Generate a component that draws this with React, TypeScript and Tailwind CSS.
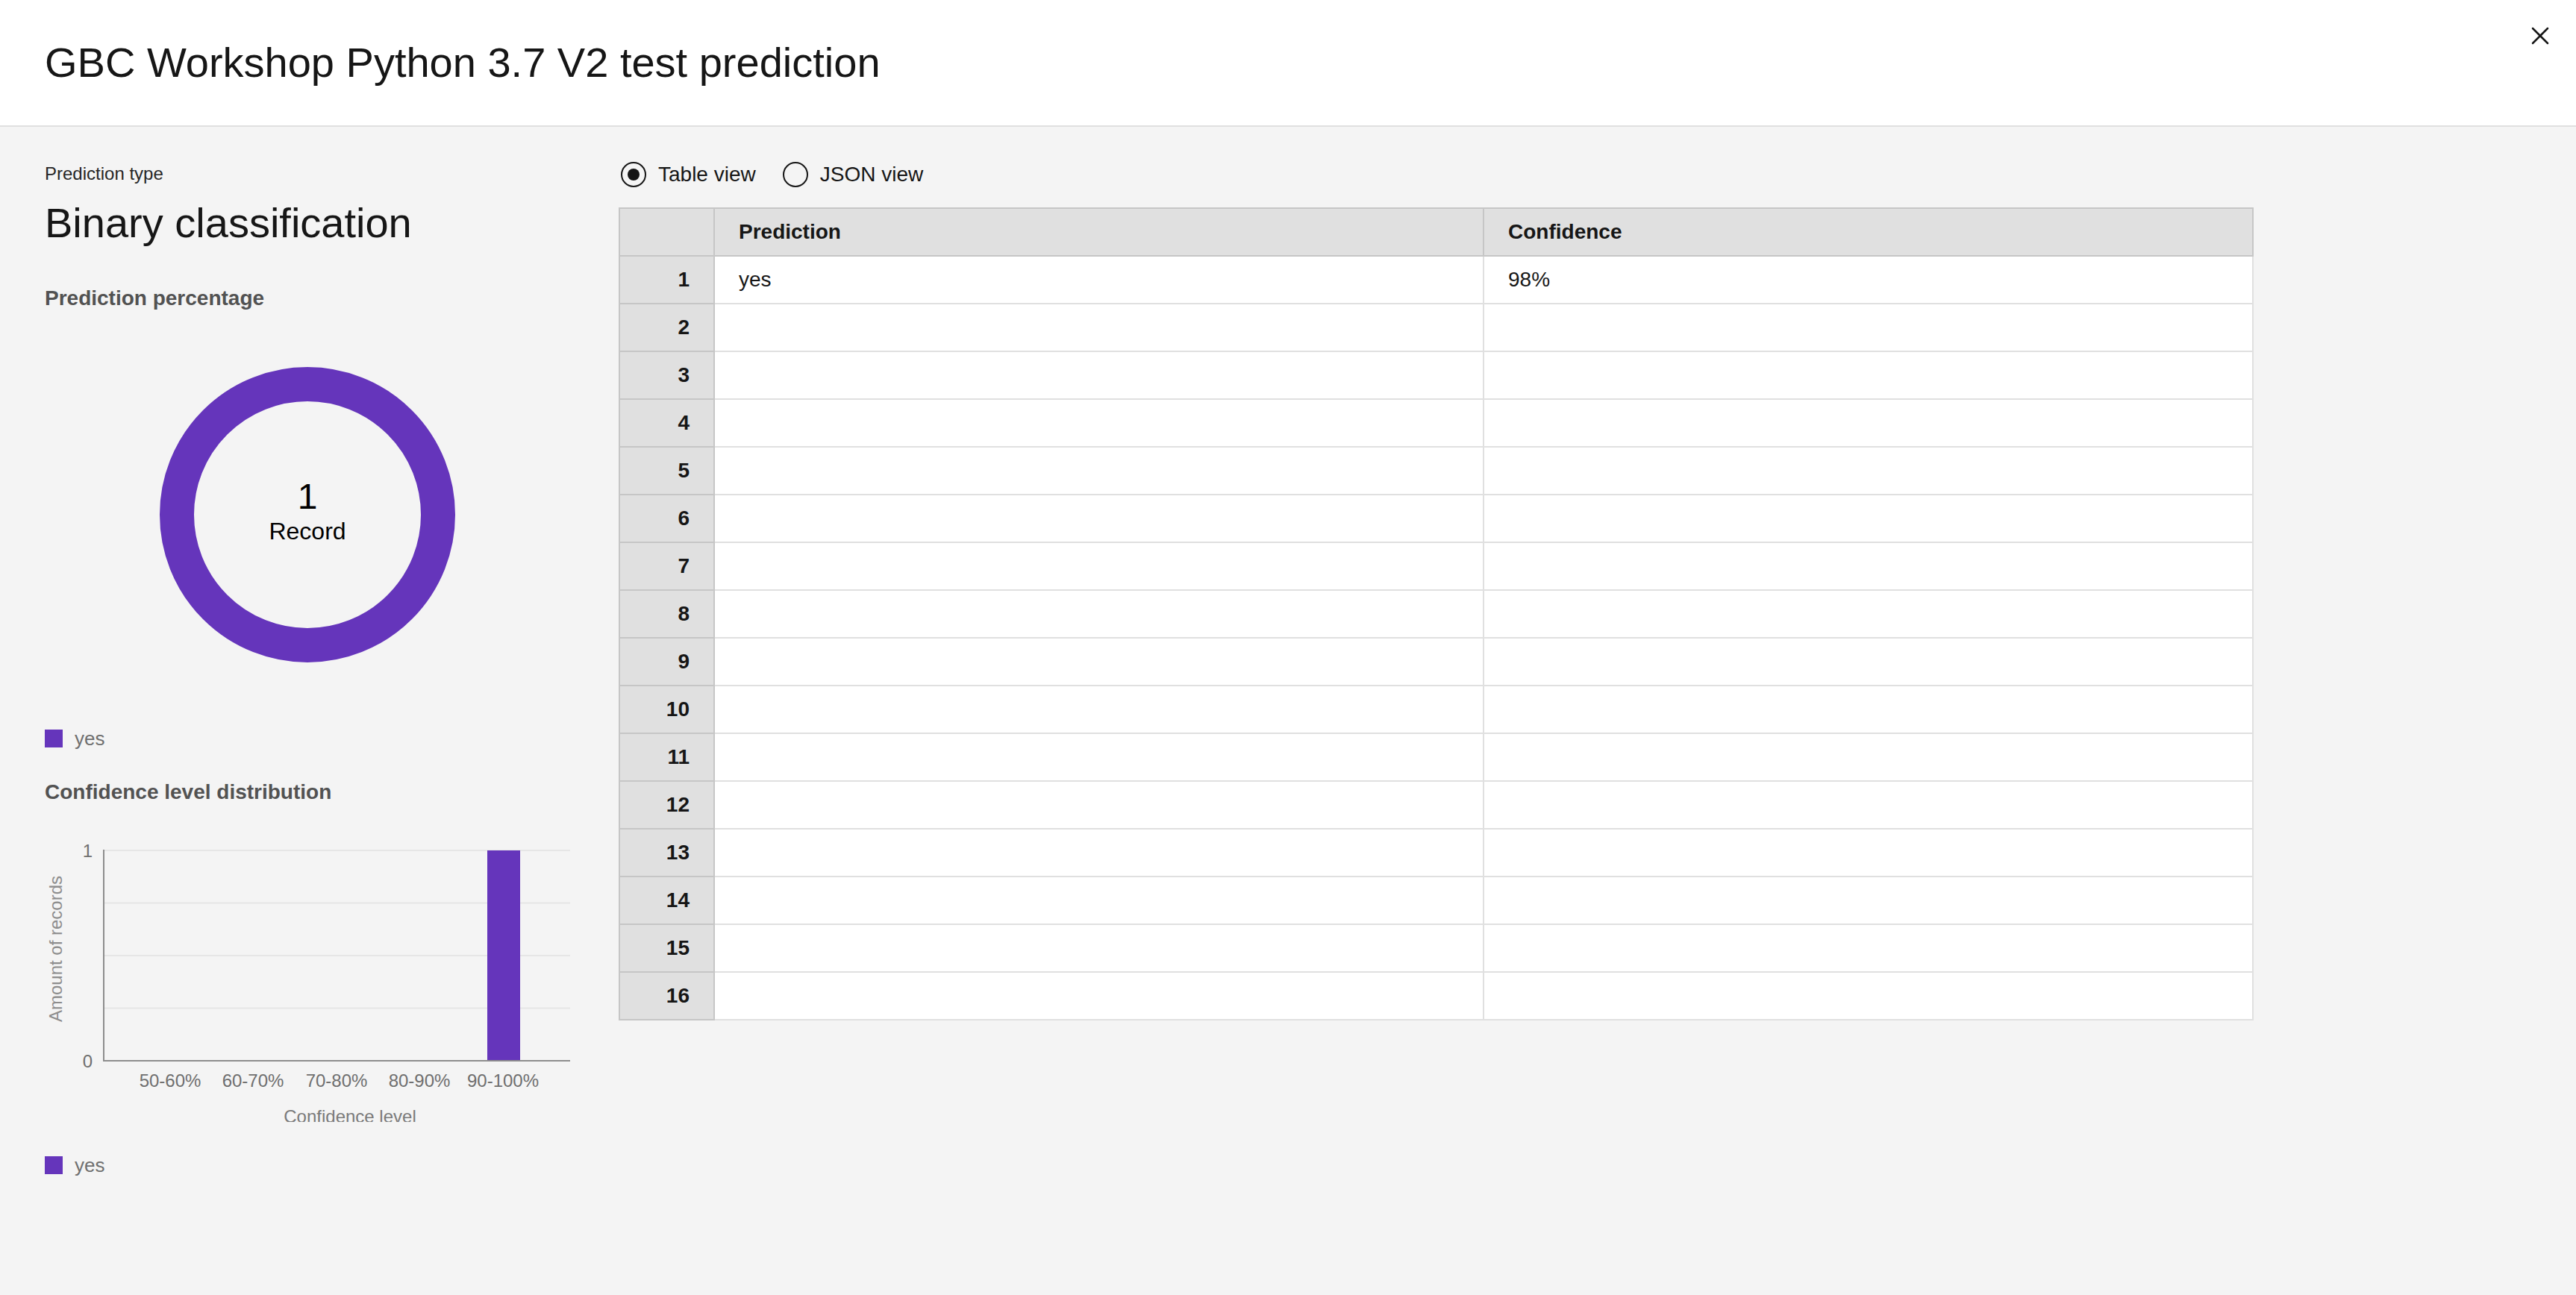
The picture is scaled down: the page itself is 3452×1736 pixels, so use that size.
import { X } from "lucide-react";

const PURPLE = "#6535bb";
const ROWS = Array.from({ length: 16 }, (_, i) => i + 1);
const BINS = ["50-60%", "60-70%", "70-80%", "80-90%", "90-100%"];

function Legend() {
  return (
    <div className="flex h-6 items-center gap-4">
      <span className="h-6 w-6" style={{ background: PURPLE }} />
      <span className="text-[26px] leading-none text-[#6f6f6f]">yes</span>
    </div>
  );
}

function Donut() {
  return (
    <div className="flex justify-center">
      <div className="flex h-[396px] w-[396px] items-center justify-center rounded-full border-[46px] border-[#6535bb]">
        <div className="flex flex-col items-center pb-[10px] text-black">
          <span className="text-[48px] leading-none">1</span>
          <span className="mt-[6px] text-[32px] leading-none">Record</span>
        </div>
      </div>
    </div>
  );
}

function ConfidenceChart() {
  const grid = [40, 110.5, 181, 251.5, 322];
  const centers = [168, 279, 391, 502, 614];
  return (
    <svg width="704" height="404" viewBox="0 0 704 404" className="block">
      {grid.map((y) => (
        <line key={y} x1="79" x2="704" y1={y} y2={y} stroke="#e6e6e6" strokeWidth="2" />
      ))}
      <rect x="593" y="40" width="44" height="282" fill={PURPLE} />
      <line x1="79" x2="79" y1="39" y2="323" stroke="#8d8d8d" strokeWidth="2" />
      <line x1="78" x2="704" y1="322" y2="322" stroke="#8d8d8d" strokeWidth="2" />
      <g fontFamily="'Liberation Sans', Arial, sans-serif" fontSize="24" fill="#6f6f6f">
        <text x="64" y="49" textAnchor="end">1</text>
        <text x="64" y="331" textAnchor="end">0</text>
        {BINS.map((b, i) => (
          <text key={b} x={centers[i]} y="357" textAnchor="middle">
            {b}
          </text>
        ))}
        <text x="409" y="405" textAnchor="middle" fill="#7a7a7a">
          Confidence level
        </text>
        <text
          x="0"
          y="0"
          textAnchor="middle"
          fill="#8d8d8d"
          transform="translate(23 172) rotate(-90)"
        >
          Amount of records
        </text>
      </g>
    </svg>
  );
}

function Radio({ label, checked }: { label: string; checked?: boolean }) {
  return (
    <label className="flex items-center gap-4">
      <span className="flex h-[34px] w-[34px] items-center justify-center rounded-full border-2 border-[#161616]">
        {checked ? <span className="h-4 w-4 rounded-full bg-[#161616]" /> : null}
      </span>
      <span className="text-[28px] leading-none text-[#161616]">{label}</span>
    </label>
  );
}

function PredictionTable() {
  return (
    <div className="grid w-[2191px] grid-cols-[127px_1031px_1031px] border-l-2 border-t-2 border-[#c6c6c6] text-[28px] text-[#161616]">
      <div className="h-16 border-b-2 border-r-2 border-[#c6c6c6] bg-[#e0e0e0]" />
      <div className="flex h-16 items-center border-b-2 border-r-2 border-[#c6c6c6] bg-[#e0e0e0] pl-8 font-bold">
        Prediction
      </div>
      <div className="flex h-16 items-center border-b-2 border-r-2 border-[#c6c6c6] bg-[#e0e0e0] pl-8 font-bold">
        Confidence
      </div>
      {ROWS.map((n) => (
        <div key={n} className="contents">
          <div className="flex h-16 items-center justify-end border-b-2 border-r-2 border-[#c6c6c6] bg-[#e0e0e0] pr-8 font-bold">
            {n}
          </div>
          <div className="flex h-16 items-center border-b-2 border-r-2 border-[#e0e0e0] bg-white pl-8">
            {n === 1 ? "yes" : ""}
          </div>
          <div className="flex h-16 items-center border-b-2 border-r-2 border-[#e0e0e0] bg-white pl-8">
            {n === 1 ? "98%" : ""}
          </div>
        </div>
      ))}
    </div>
  );
}

export default function App() {
  return (
    <div className="min-h-screen bg-[#f4f4f4] font-['Liberation_Sans',Arial,sans-serif] text-[#161616]">
      <header className="flex h-[170px] justify-between border-b-2 border-[#e0e0e0] bg-white pl-[60px] pr-[28px]">
        <h1 className="self-center text-[56px] font-normal leading-none">
          GBC Workshop Python 3.7 V2 test prediction
        </h1>
        <button className="mt-[28px] flex h-10 w-10 items-center justify-center text-[#161616]">
          <X size={40} strokeWidth={1.5} />
        </button>
      </header>

      <main className="flex pl-[60px]">
        <section className="w-[704px] shrink-0 pt-[51px]">
          <p className="text-[24px] leading-6 text-[#262626]">Prediction type</p>
          <h2 className="mt-[26px] text-[56px] font-normal leading-[56px]">
            Binary classification
          </h2>
          <h3 className="mt-[59px] text-[28px] font-bold leading-7 text-[#525252]">
            Prediction percentage
          </h3>
          <div className="mt-[78px]">
            <Donut />
          </div>
          <div className="mt-[90px]">
            <Legend />
          </div>
          <h3 className="mt-[46px] text-[28px] font-bold leading-7 text-[#525252]">
            Confidence level distribution
          </h3>
          <div className="mt-6">
            <ConfidenceChart />
          </div>
          <div className="mt-[46px]">
            <Legend />
          </div>
        </section>

        <section className="ml-[65px] pt-[47px]">
          <div className="flex items-center gap-9 pl-[3px]">
            <Radio label="Table view" checked />
            <Radio label="JSON view" />
          </div>
          <div className="mt-[27px]">
            <PredictionTable />
          </div>
        </section>
      </main>
    </div>
  );
}
